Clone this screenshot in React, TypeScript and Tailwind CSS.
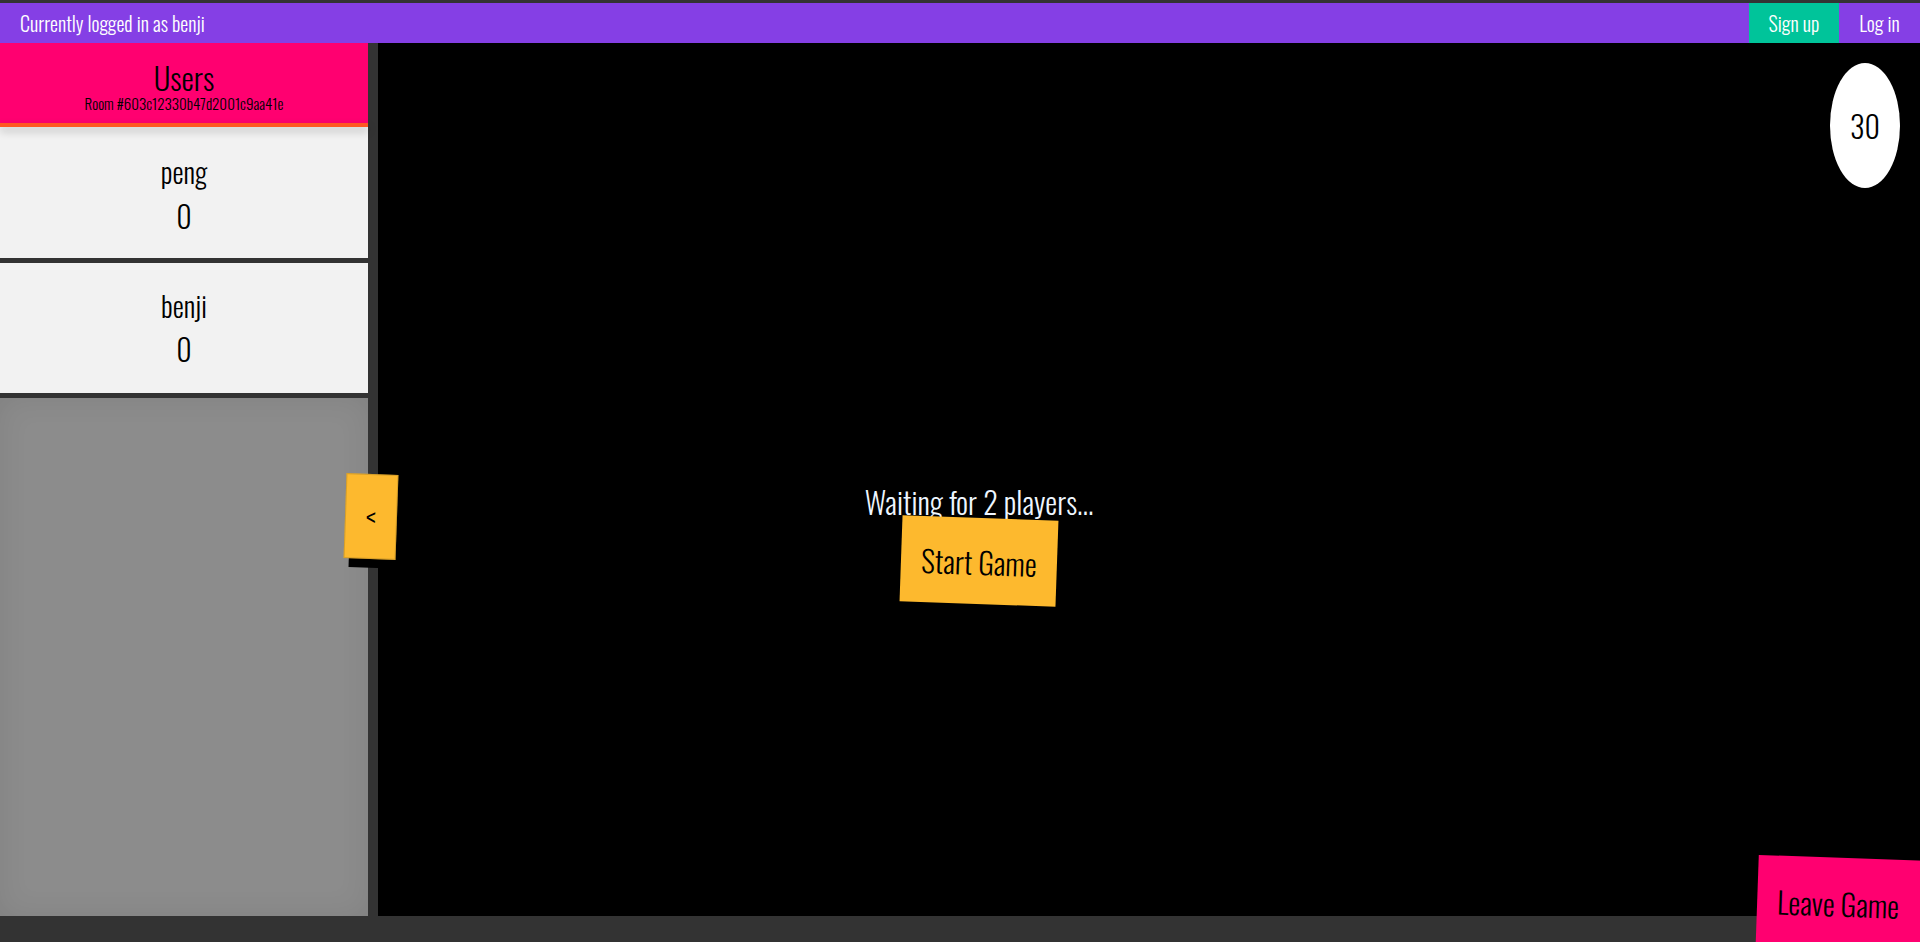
import React from "react";

const font = { fontFamily: '"Oswald", "Liberation Sans Narrow", "DejaVu Sans Condensed", sans-serif' };

export default function App() {
  return (
    <div className="w-[1920px] h-[942px] bg-[#333333] flex flex-col overflow-hidden font-light" style={font}>
      <div className="h-[3px] bg-[#333333]" />
      <div className="h-[40px] bg-[#853fe5] flex items-center text-white">
        <div className="pl-5 text-[20px] flex-1">Currently logged in as benji</div>
        <div className="h-full w-[90px] bg-[#00c49a] flex items-center justify-center text-[20px]">Sign up</div>
        <div className="h-full w-[81px] flex items-center justify-center text-[20px]">Log in</div>
      </div>
      <div className="flex h-[873px]">
        <div className="w-[368px] flex flex-col bg-[#333333] relative">
          <div className="h-[80px] bg-[#ff0070] flex flex-col items-center pt-[16px] text-black">
            <div className="text-[31px] leading-[36px]">Users</div>
            <div className="text-[15px] leading-[16px]">Room #603c12330b47d2001c9aa41e</div>
          </div>
          <div className="h-[4px] bg-[#ff5722] shadow-[0_4px_8px_rgba(0,0,0,0.25)] z-10" />
          <div className="h-[131px] bg-[#f2f2f2] flex flex-col items-center pt-[27px] text-black">
            <div className="text-[28px] leading-[36px]">peng</div>
            <div className="text-[30px] leading-[40px] mt-[6px]">0</div>
          </div>
          <div className="h-[5px]" />
          <div className="h-[130px] bg-[#f2f2f2] flex flex-col items-center pt-[25px] text-black">
            <div className="text-[28px] leading-[36px]">benji</div>
            <div className="text-[30px] leading-[40px] mt-[5px]">0</div>
          </div>
          <div className="h-[5px]" />
          <div className="flex-1 bg-[#8c8c8c] shadow-[inset_0_0_30px_rgba(0,0,0,0.08)]" />
          <div className="absolute left-[350px] top-[439px] w-[50px] h-[86px] bg-black rotate-[2deg]" />
          <div className="absolute left-[345px] top-[431px] w-[52px] h-[85px] bg-[#fdb92e] rotate-[2deg] flex items-center justify-center text-black text-[30px] z-20 border border-[#a37a20]/40">&lt;</div>
        </div>
        <div className="w-[10px]" />
        <div className="flex-1 bg-black relative flex flex-col items-center justify-center pr-[340px] pt-[126px]">
          <div className="flex flex-col items-center">
            <div className="text-[#eef6ff] text-[30px] leading-[40px]">Waiting for 2 players...</div>
            <div className="w-[156px] h-[86px] bg-[#fdb92e] rotate-[2deg] flex items-center justify-center text-black text-[30px] -mt-[4px]">Start Game</div>
          </div>
          <div className="absolute right-[20px] top-[20px] w-[70px] h-[125px] rounded-[50%] bg-white flex items-center justify-center text-black text-[30px]">30</div>
        </div>
      </div>
      <div className="flex-1" />
      <div className="absolute left-[1757px] top-[858px] w-[180px] h-[100px] bg-[#ff0070] rotate-[2deg] flex items-center pl-[20px] text-black text-[30px]">
        <span className="-mt-[10px]">Leave Game</span>
      </div>
    </div>
  );
}
